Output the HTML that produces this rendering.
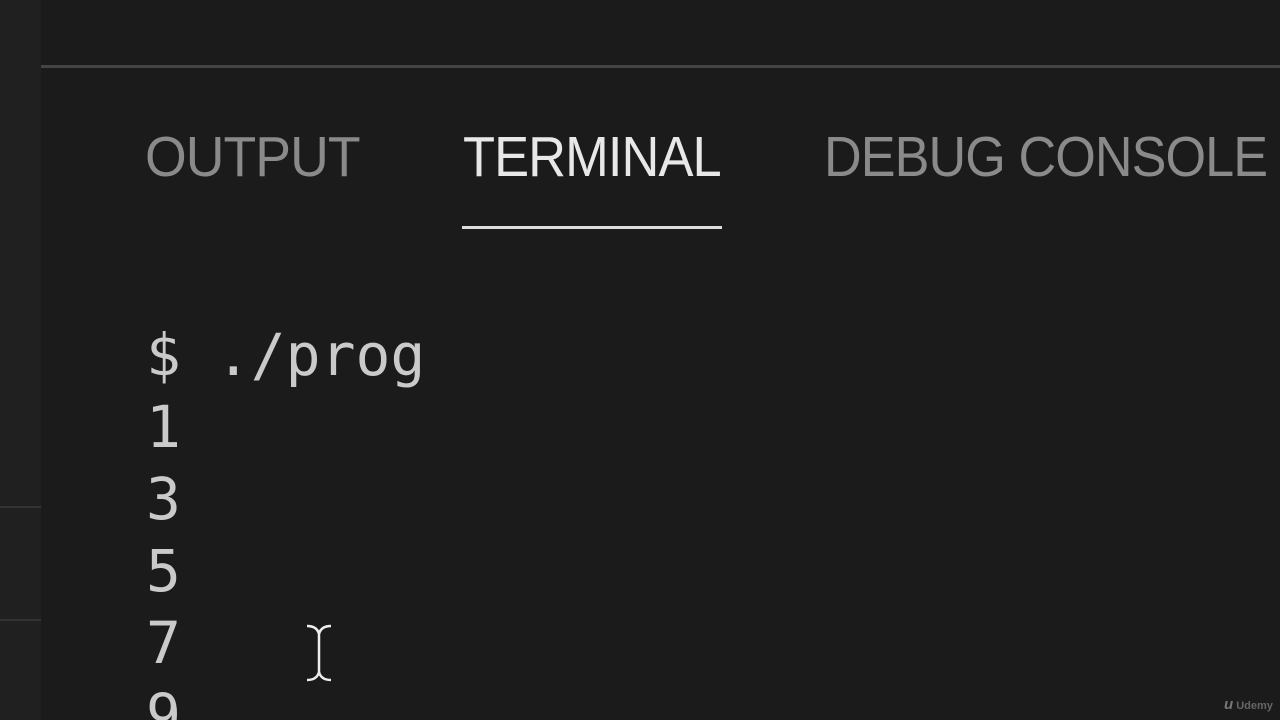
<!DOCTYPE html>
<html><head><style>
html,body{margin:0;padding:0;width:1280px;height:720px;overflow:hidden;background:#1b1b1b;}
#wrap{position:fixed;left:0;top:0;width:1280px;height:720px;overflow:hidden;background:#1b1b1b;}
.left{position:absolute;left:0;top:0;width:41px;height:720px;background:#202020;}
.hl{position:absolute;left:0;width:41px;height:2px;background:#333;}
.topline{position:absolute;left:41px;top:65px;width:1239px;height:3px;background:#444;}
.tab{position:absolute;top:122px;font-family:"Liberation Sans",sans-serif;font-size:57px;letter-spacing:-1px;line-height:70px;white-space:nowrap;transform-origin:0 0;}
.ul{position:absolute;left:462px;top:226px;width:260px;height:3px;background:#ddd;}
.term{position:absolute;left:146px;top:319px;font-family:"DejaVu Sans Mono","Liberation Mono",monospace;font-size:58px;line-height:72px;color:#cacaca;white-space:pre;}
.logo{position:absolute;left:1224px;top:696px;font-family:"Liberation Sans",sans-serif;font-size:11px;color:#666;}
</style></head><body><div id="wrap">
<div class="left"></div>
<div class="hl" style="top:506px"></div>
<div class="hl" style="top:619px"></div>
<div class="topline"></div>
<div class="tab" style="left:145px;color:#8a8a8a;transform:scaleX(0.94)">OUTPUT</div>
<div class="tab" style="left:463px;color:#e8e8e8;transform:scaleX(0.92)">TERMINAL</div>
<div class="tab" style="left:824px;color:#8a8a8a;transform:scaleX(0.915)">DEBUG CONSOLE</div>
<div class="ul"></div>
<div class="term">$ ./prog
1
3
5
7
9</div>
<svg style="position:absolute;left:305px;top:624px" width="28" height="58" viewBox="0 0 28 58"><path d="M2 2 Q12 2 14 10 Q16 2 26 2 M14 10 V48 M2 56 Q12 56 14 48 Q16 56 26 56" stroke="#eee" stroke-width="2.5" fill="none"/></svg>
<div class="logo"><b style="font-size:15px;font-style:italic;color:#777">u</b> <b>Udemy</b></div>
</div></body></html>
